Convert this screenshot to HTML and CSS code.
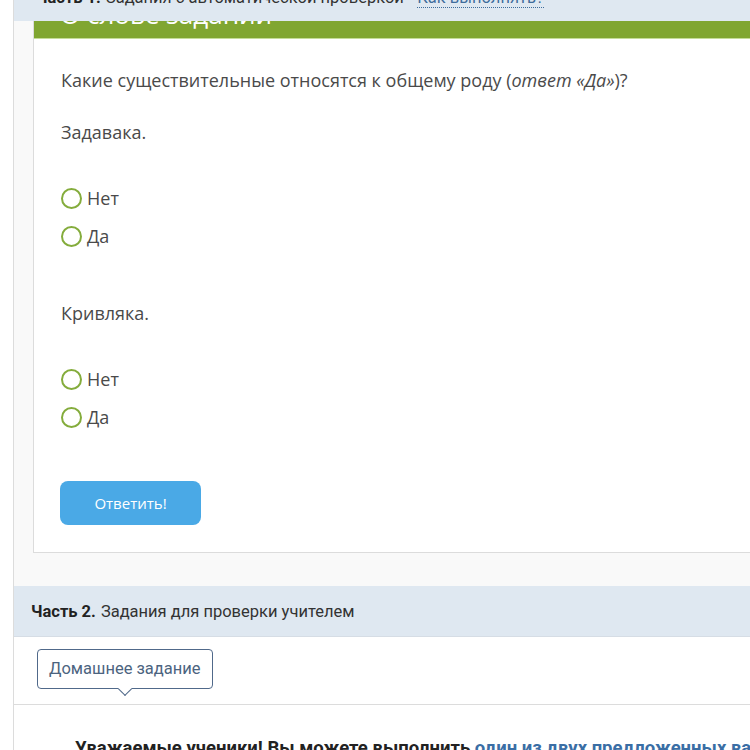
FILE: index.html
```html
<!DOCTYPE html>
<html lang="ru">
<head>
<meta charset="utf-8">
<title>Задания</title>
<link rel="stylesheet" href="styles.css">
</head>
<body>
<div class="page">
  <div class="part-head part-head--first">
    <b>Часть 1.</b> Задания с автоматической проверкой · <a class="how" href="#">Как выполнять?</a>
  </div>
  <div class="task-area">
    <div class="card">
      <div class="card-title"><span class="card-title-text">О слове задании</span></div>
      <div class="card-body">
        <p class="question">Какие существительные относятся к общему роду (<i>ответ «Да»</i>)?</p>
        <div class="item">
          <p class="word">Задавака.</p>
          <label class="opt"><span class="radio"></span>Нет</label>
          <label class="opt"><span class="radio"></span>Да</label>
        </div>
        <div class="item">
          <p class="word">Кривляка.</p>
          <label class="opt"><span class="radio"></span>Нет</label>
          <label class="opt"><span class="radio"></span>Да</label>
        </div>
        <button class="answer">Ответить!</button>
      </div>
    </div>
  </div>
  <div class="part-head">
    <b>Часть 2.</b> Задания для проверки учителем
  </div>
  <div class="tabs">
    <span class="tab">Домашнее задание</span>
  </div>
  <div class="content">
    <p class="notice">Уважаемые ученики! Вы можете выполнить <a href="#">один из двух предложенных вариантов</a></p>
  </div>
</div>
</body>
</html>
```
FILE: styles.css
```css
html, body {
  margin: 0;
  padding: 0;
  background: #fff;
  overflow: hidden;
}
.page {
  margin-left: 13px;
  margin-top: -26px;
  border-left: 1px solid #dcdcdc;
  background: #f9f9f9;
  font-family: "Open Sans", sans-serif;
}
.part-head {
  height: 50px;
  display: flex;
  align-items: center;
  padding-left: 17px;
  background: #dfe8f1;
  border-bottom: 1px solid #d6dde5;
  font-family: Roboto, "Noto Sans", sans-serif;
  font-size: 16.5px;
  color: #333;
  white-space: nowrap;
}
.part-head b {
  font-weight: 700;
  margin-right: 5px;
  color: #222;
}
.part-head--first {
  height: 47px;
  border-bottom: none;
  padding-left: 22px;
}
.how {
  margin-left: 5px;
  color: #3f6d9c;
  text-decoration: none;
  border-bottom: 1px dotted #3f6d9c;
}
.task-area {
  padding: 0 0 33px 19px;
}
.card {
  background: #fff;
  border: 1px solid #dcdcdc;
  border-top: none;
  border-right: none;
}
.card-title {
  display: flex;
  align-items: flex-end;
  height: 17px;
  background: #80a631;
  border-bottom: 1px solid #c4dc98;
  color: #fff;
  font-size: 26px;
  padding-left: 26px;
  overflow: hidden;
  white-space: nowrap;
}
.card-title-text {
  flex: none;
  line-height: 20px;
  margin-bottom: 14px;
}
.card-body {
  padding: 29px 0 27px 27px;
}
.question {
  margin: 0 0 28px;
  font-size: 18px;
  line-height: 24px;
  color: #4a4a4a;
}
.word {
  margin: 0 0 42px;
  font-size: 18px;
  line-height: 24px;
  color: #4a4a4a;
}
.item + .item {
  margin-top: 53px;
}
.opt {
  display: flex;
  align-items: center;
  height: 24px;
  font-size: 18px;
  color: #4a4a4a;
}
.opt + .opt {
  margin-top: 14px;
}
.radio {
  width: 17px;
  height: 17px;
  border: 2.5px solid #84ac3c;
  border-radius: 50%;
  margin-right: 5px;
  flex: none;
}
.answer {
  display: block;
  margin-top: 52px;
  margin-left: -1px;
  width: 141px;
  height: 44px;
  border: none;
  border-radius: 8px;
  background: #4aa9e6;
  color: #fff;
  font-family: "Open Sans", sans-serif;
  font-size: 15px;
}
.tabs {
  display: flex;
  background: #fff;
  padding: 12px 0 15px 23px;
  border-bottom: 1px solid #dcdcdc;
}
.tab {
  position: relative;
  height: 38px;
  line-height: 38px;
  padding: 0 11px 0 11px;
  border: 1px solid #50698a;
  border-radius: 4px;
  font-family: Roboto, "Noto Sans", sans-serif;
  font-size: 16.5px;
  color: #4c6480;
  background: #fff;
}
.tab::after {
  content: "";
  position: absolute;
  left: 82px;
  bottom: -6px;
  width: 9px;
  height: 9px;
  background: #fff;
  border-right: 1px solid #50698a;
  border-bottom: 1px solid #50698a;
  transform: rotate(45deg);
}
.content {
  background: #fff;
  padding: 32px 0 20px 61px;
}
.notice {
  margin: 0;
  font-family: Roboto, "Noto Sans", sans-serif;
  font-weight: 700;
  font-size: 18.5px;
  color: #222;
  white-space: nowrap;
}
.notice a {
  color: #3a6ea5;
  text-decoration: underline;
}
```
